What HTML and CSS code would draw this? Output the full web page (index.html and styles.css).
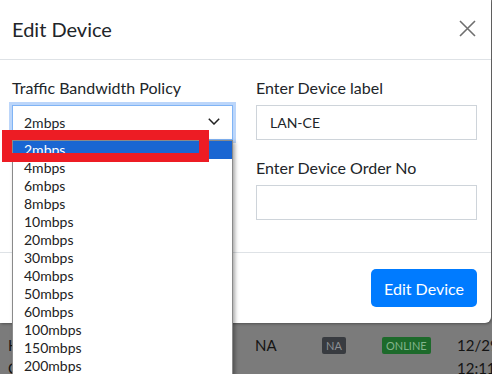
FILE: index.html
```html
<!DOCTYPE html>
<html>
<head>
<meta charset="utf-8">
<link rel="stylesheet" href="styles.css">
</head>
<body>
<div class="modal">
  <div class="modal-header">
    <h5 class="modal-title">Edit Device</h5>
    <button class="close" aria-label="Close">
      <svg width="17" height="17" viewBox="0 0 17 17"><path d="M1 1L16 16M16 1L1 16" stroke="#6f6f6f" stroke-width="1.6" fill="none"/></svg>
    </button>
  </div>
  <div class="modal-body">
    <div class="col">
      <div class="form-group">
        <label class="label">Traffic Bandwidth Policy</label>
        <div class="select-wrap">
          <div class="select">
            <span>2mbps</span>
            <svg class="chev" width="12" height="7" viewBox="0 0 12 7"><path d="M0.8 0.8L6 6L11.2 0.8" stroke="#222" stroke-width="1.5" fill="none"/></svg>
          </div>
          <ul class="dropdown">
            <li class="selected">2mbps</li>
            <li>4mbps</li>
            <li>6mbps</li>
            <li>8mbps</li>
            <li>10mbps</li>
            <li>20mbps</li>
            <li>30mbps</li>
            <li>40mbps</li>
            <li>50mbps</li>
            <li>60mbps</li>
            <li>100mbps</li>
            <li>150mbps</li>
            <li>200mbps</li>
          </ul>
        </div>
      </div>
    </div>
    <div class="col">
      <div class="form-group">
        <label class="label">Enter Device label</label>
        <div class="input">LAN-CE</div>
      </div>
      <div class="form-group">
        <label class="label">Enter Device Order No</label>
        <div class="input"></div>
      </div>
    </div>
  </div>
  <div class="modal-footer">
    <button class="btn">Edit Device</button>
  </div>
</div>
<div class="table-row">
  <div class="cell two">H<br>C</div>
  <div class="cell">NA</div>
  <div class="cell"><span class="badge dark">NA</span></div>
  <div class="cell"><span class="badge green">ONLINE</span></div>
  <div class="cell two">12/29<br>12:11</div>
</div>
<div class="annot"></div>
</body>
</html>
```

FILE: styles.css
```css
* { box-sizing: border-box; }
html, body { margin: 0; padding: 0; }
body {
  width: 492px;
  height: 374px;
  overflow: hidden;
  background: #7b7b7b;
  font-family: Lato, "Noto Sans", sans-serif;
  color: #212529;
  position: relative;
}
.modal {
  width: 491px;
  background: #fff;
  border-bottom-right-radius: 6px;
  box-shadow: 1px 1px 3px rgba(0,0,0,0.35);
  position: relative;
  z-index: 1;
}
.modal-header {
  height: 60px;
  border-bottom: 1px solid #dee2e6;
  display: flex;
  align-items: center;
  justify-content: space-between;
  padding: 0 15px 0 12px;
}
.modal-title {
  margin: 0;
  font-size: 20px;
  font-weight: 400;
  line-height: 27px;
  padding-bottom: 1px;
}
.close {
  border: 0;
  background: none;
  padding: 0;
  width: 17px;
  height: 17px;
  display: flex;
  margin-top: -2px;
}
.modal-body {
  display: grid;
  grid-template-columns: 221px 221px;
  column-gap: 23px;
  padding: 17px 14px 15px 12px;
}
.form-group { margin-bottom: 17px; }
.label {
  display: block;
  font-size: 16px;
  line-height: 22px;
  margin-bottom: 6px;
}
.input {
  height: 35px;
  border: 1px solid #ced4da;
  font-size: 14px;
  line-height: 33px;
  padding-left: 13px;
}
.select-wrap { position: relative; }
.select {
  height: 35px;
  border: 1px solid #80b4f5;
  box-shadow: 0 0 0 3px #bcd6fa;
  font-size: 14px;
  display: flex;
  align-items: center;
  justify-content: space-between;
  padding: 0 12px 0 11px;
}
.chev { margin-top: -3px; }
.dropdown {
  position: absolute;
  left: 0;
  top: 35px;
  width: 221px;
  margin: 0;
  padding: 0;
  list-style: none;
  background: #fff;
  border: 1px solid #8a8a8a;
  border-bottom: 0;
  box-shadow: 2px 2px 4px rgba(0,0,0,0.35);
  z-index: 5;
}
.dropdown li {
  height: 18px;
  line-height: 18px;
  font-size: 14px;
  padding-left: 11px;
  color: #222;
}
.dropdown li.selected {
  background: #1a66d2;
  color: #fff;
}
.modal-footer {
  border-top: 1px solid #dee2e6;
  display: flex;
  justify-content: flex-end;
  padding: 16px 14px 16px 0;
}
.btn {
  height: 38px;
  width: 106px;
  border: 0;
  border-radius: 5px;
  background: #007bff;
  color: #fff;
  font-family: Lato, "Noto Sans", sans-serif;
  font-size: 16px;
  padding: 0;
}
.table-row {
  display: grid;
  grid-template-columns: 247px 67px 60px 75px 35px;
  padding: 11px 0 0 8px;
  font-size: 15px;
  color: #141414;
  white-space: nowrap;
}
.cell { line-height: 23px; }
.badge {
  display: inline-block;
  font-size: 11px;
  line-height: 17px;
  padding: 0 4px;
  border-radius: 2px;
  vertical-align: 1px;
}
.badge.dark { background: #383b40; color: #8d9094; }
.badge.green { background: #1d6a2b; color: #83b48c; }
.annot {
  position: absolute;
  left: 2px;
  top: 130px;
  width: 207px;
  height: 32px;
  border: 10px solid #ed1c24;
  border-bottom-width: 9px;
  z-index: 10;
}
```
